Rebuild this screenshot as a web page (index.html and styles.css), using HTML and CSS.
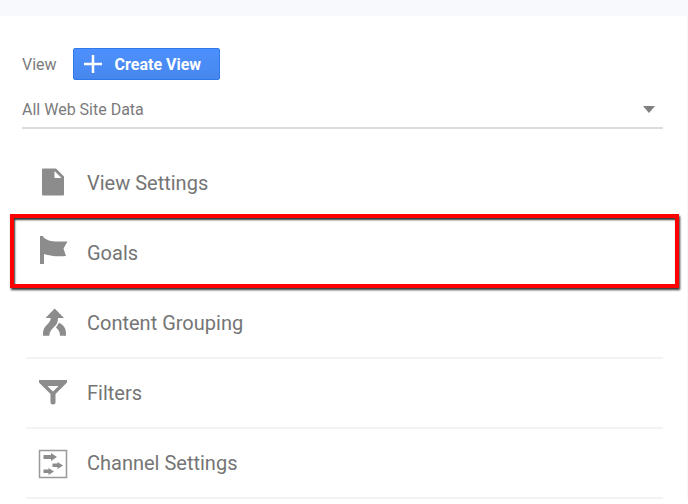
FILE: index.html
```html
<!DOCTYPE html>
<html lang="en">
<head>
<meta charset="utf-8">
<title>View administration</title>
<link rel="stylesheet" href="styles.css">
</head>
<body>
<main class="panel">
  <header class="view-header">
    <label class="view-label" for="view-select">View</label>
    <button class="create-button" type="button">
      <svg class="plus" viewBox="0 0 18 18" aria-hidden="true"><path d="M9 0v18M0 9h18"/></svg>
      Create View
    </button>
  </header>
  <div class="view-picker">
    <select id="view-select" class="view-select"><option>All Web Site Data</option></select>
    <svg class="caret" viewBox="0 0 12 7" aria-hidden="true"><path d="M0 0h12L6 7z"/></svg>
  </div>
  <nav>
    <ul class="menu">
      <li class="menu-item menu-item-plain">
        <a class="menu-link" href="#view-settings">
          <svg class="icon" viewBox="0 0 28 28" aria-hidden="true"><path fill-rule="evenodd" d="M4 .5h13l8 8v18a1 1 0 0 1-1 1H4a1 1 0 0 1-1-1v-25a1 1 0 0 1 1-1zM15.500 3v7h7z"/></svg>
          View Settings
        </a>
      </li>
      <li class="menu-item menu-item-plain menu-item-highlighted">
        <a class="menu-link" href="#goals">
          <svg class="icon" viewBox="0 2 28 28" aria-hidden="true"><path d="M1 0h3l1 2c4 2.500 7 3.500 12 3.500h11.500l-4 7 2.500 7.500c-8 .5-14 .5-22-2v10H1z"/></svg>
          Goals
        </a>
      </li>
      <li class="menu-item">
        <a class="menu-link" href="#content-grouping">
          <svg class="icon" viewBox="0 0 28 28" aria-hidden="true"><path d="M15.700.5l9.300 9.500h-6c0 4-1 6-4 9-3 3-4.500 5-4.700 8.700H4c-.3-5.500 1-8 4-11 2.500-2.500 3.700-4 3.700-6.700H6.500z"/><path d="M20 14.800c5.500 2.500 7.300 6.200 7 12.900h-6c0-4-1.500-6-4-8.200z"/></svg>
          Content Grouping
        </a>
      </li>
      <li class="menu-item">
        <a class="menu-link" href="#filters">
          <svg class="icon" viewBox="0 0 28 28" aria-hidden="true"><path fill-rule="evenodd" d="M0 2h28v2.500L16.500 16v8a2.500 2.500 0 0 1-5 0v-8L0 4.500zM8.500 8l5.500 5.500 5.500-5.500z"/></svg>
          Filters
        </a>
      </li>
      <li class="menu-item">
        <a class="menu-link" href="#channel-settings">
          <svg class="icon" viewBox="0 -2 28 28" aria-hidden="true"><path class="icon-frame" d="M.5.5h27v27H.5z"/><path d="M4.500 5h7.500V3l6 4-6 4V9H4.500zM13.500 13.500h5V12l5.500 3.500-5.500 3.500v-2h-5zM4.500 19.500h5V18l5.500 3.500L9.500 25v-2h-5z"/></svg>
          Channel Settings
        </a>
      </li>
    </ul>
  </nav>
</main>
</body>
</html>
```
FILE: styles.css
```css
* {
  box-sizing: border-box;
}

body {
  margin: 0;
  background: #fff;
  color: #7b7b7b;
  font-family: Roboto, "Liberation Sans", sans-serif;
  font-size: 16px;
}

.panel {
  padding: 32px 24px 0 22px;
  border-top: 16px solid #f8f9fc;
  border-right: 1px solid #f8f8fa;
}

.view-header {
  display: flex;
  align-items: center;
  gap: 16px;
}

.create-button {
  display: flex;
  align-items: center;
  gap: 13px;
  height: 32px;
  padding: 0 18px 0 10px;
  border: 1px solid #3079ed;
  border-radius: 2px;
  background: linear-gradient(#4d90fe, #4787ed);
  color: #fff;
  font: bold 16px Roboto, "Liberation Sans", sans-serif;
}

.plus {
  width: 18px;
  height: 18px;
  fill: none;
  stroke: #fff;
  stroke-width: 2.5;
}

.view-picker {
  display: flex;
  align-items: center;
  margin-top: 12px;
  padding-right: 8px;
  border-bottom: 2px solid #dcdcdc;
}

.view-select {
  flex: 1;
  height: 35px;
  padding: 0;
  border: 0;
  appearance: none;
  background: none;
  color: #7b7b7b;
  font: inherit;
}

.caret {
  width: 12px;
  height: 7px;
  fill: #808080;
  pointer-events: none;
}

.menu {
  margin: 20px 0 0 4px;
  padding: 0;
  list-style: none;
}

.menu-item {
  position: relative;
  border-bottom: 2px solid #f3f3f3;
}

.menu-item-plain {
  border-color: transparent;
}

.menu-link {
  display: flex;
  align-items: center;
  gap: 20px;
  height: 68px;
  padding-left: 13px;
  color: #757575;
  font-size: 20px;
  text-decoration: none;
}

.icon {
  width: 28px;
  height: 28px;
  margin-bottom: 2px;
  overflow: visible;
  fill: #8c8c8c;
}

.icon-frame {
  fill: none;
  stroke: #999;
  stroke-width: 1.5;
}

/* Callout frame around the highlighted entry */
.menu-item-highlighted::after {
  content: "";
  position: absolute;
  inset: -5px -16px -1px;
  border: 4px solid #f00;
  box-shadow: 1px 2px 2px #333, inset 1px 2px 2px #333;
  pointer-events: none;
}
```
